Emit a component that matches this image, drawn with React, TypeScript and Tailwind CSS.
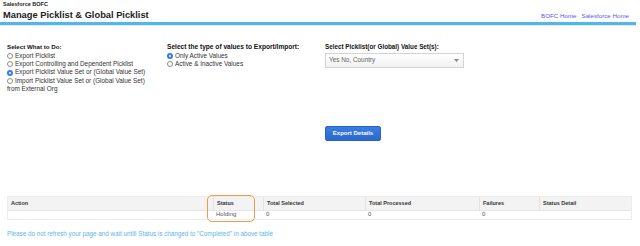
import React from "react";

const font = { fontFamily: '"Liberation Sans", Arial, sans-serif' };

function Radio({ checked, label }: { checked?: boolean; label: string }) {
  return (
    <div className="flex items-center gap-[2px] leading-[8.4px]">
      {checked ? (
        <span className="flex h-[6px] w-[6px] items-center justify-center rounded-full bg-[#2f7cf6]">
          <span className="h-[2px] w-[2px] rounded-full bg-white" />
        </span>
      ) : (
        <span className="h-[6px] w-[6px] rounded-full border-[0.5px] border-[#8a8a8a] bg-white" />
      )}
      <span>{label}</span>
    </div>
  );
}

const columns = [
  { name: "Action", width: "w-[205px]", value: "" },
  { name: "Status", width: "w-[50px]", value: "Holding" },
  { name: "Total Selected", width: "w-[102px]", value: "0" },
  { name: "Total Processed", width: "w-[114px]", value: "0" },
  { name: "Failures", width: "w-[60px]", value: "0" },
  { name: "Status Detail", width: "flex-1", value: "" },
];

export default function App() {
  return (
    <div className="relative h-[246px] w-[640px] overflow-hidden bg-white text-[#222222] antialiased" style={font}>
      {/* header */}
      <div className="px-[3px] pt-[1px]">
        <div className="text-[5.5px] font-bold leading-[7px]">Salesforce BOFC</div>
        <div className="flex items-end justify-between pt-[1px] pr-[8px]">
          <h1 className="text-[9.3px] font-bold leading-[12px]">Manage Picklist &amp; Global Picklist</h1>
          <div className="flex gap-[5px] pb-[1px] text-[6.2px] leading-[8px] text-[#5757f2]">
            <a>BOFC Home</a>
            <a>Salesforce Home</a>
          </div>
        </div>
      </div>
      <div className="mt-[1px] mr-[4px] h-[3px] bg-[#54b5ea]" />
      <div className="mr-[4px] h-px bg-[#d6eefa]" />

      {/* options */}
      <div className="flex pt-[17px] pl-[7px] text-[6.4px] text-[#333333]">
        <div className="w-[160px]">
          <div className="text-[6.2px] font-bold leading-[8.5px] text-[#111111]">Select What to Do:</div>
          <Radio label="Export Picklist" />
          <Radio label="Export Controlling and Dependent Picklist" />
          <Radio checked label="Export Picklist Value Set or (Global Value Set)" />
          <Radio label="Import Picklist Value Set or (Global Value Set)" />
          <div className="leading-[8.5px]">from External Org</div>
        </div>
        <div className="w-[158px]">
          <div className="text-[6.6px] font-bold leading-[8.5px] text-[#111111]">Select the type of values to Export/Import:</div>
          <Radio checked label="Only Active Values" />
          <Radio label="Active & Inactive Values" />
        </div>
        <div className="flex flex-col">
          <div className="text-[6.3px] font-bold leading-[8.5px] text-[#111111]">Select Picklist(or Global) Value Set(s):</div>
          <div className="mt-[1px] flex h-[15px] w-[139px] items-center justify-between border border-[#d4d4d4] bg-gradient-to-b from-white to-[#f1f1f1] pr-[4px] pl-[3px] text-[#666666]">
            <span>Yes No, Country</span>
            <svg width="5" height="3" viewBox="0 0 5 3">
              <path d="M0 0h5L2.5 3z" fill="#888" />
            </svg>
          </div>
          <div className="mt-[58px]">
            <button className="h-[15px] w-[56px] rounded-[2px] border border-[#2a62c2] bg-gradient-to-b from-[#3a7de0] to-[#2b69cf] text-[6px] font-bold text-white">
              Export Details
            </button>
          </div>
        </div>
      </div>

      {/* table */}
      <div className="mt-[55px] mr-[8px] ml-[7px] border border-[#ececec] text-[6px]">
        <div className="flex h-[13px] bg-[#f3f3f3]">
          {columns.map((c, i) => (
            <div
              key={c.name}
              className={`${c.width} flex items-center pl-[3px] text-[5.5px] font-bold text-[#333333] ${i > 0 ? "border-l border-[#e2e2e2]" : ""}`}
            >
              {c.name}
            </div>
          ))}
        </div>
        <div className="flex h-[9px] border-t border-[#e6e6e6] text-[#555555]">
          {columns.map((c) => (
            <div key={c.name} className={`${c.width} flex items-center pl-[3px]`}>
              {c.value}
            </div>
          ))}
        </div>
      </div>

      <p className="mt-[10px] ml-[7px] text-[6.3px] leading-[8px] text-[#5bb7e8]">
        Please do not refresh your page and wait untill Status is changed to "Completed" in above table
      </p>

      {/* highlight annotation */}
      <div className="absolute top-[195px] left-[207px] h-[27px] w-[48px] rounded-[5px] border border-[#f19b4a]" />
    </div>
  );
}
